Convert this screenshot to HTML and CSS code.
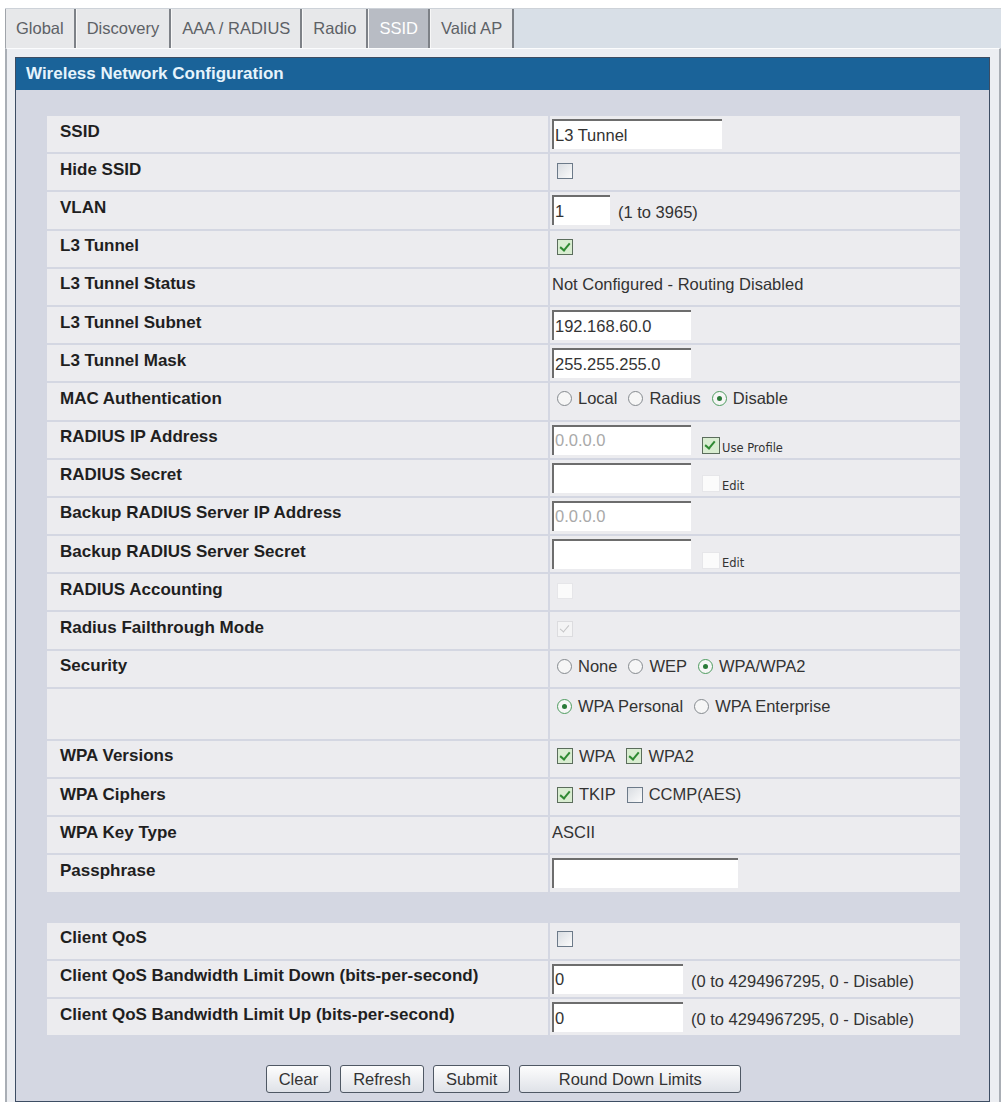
FILE: index.html
```html
<html>
<head>
    <link rel="stylesheet" href="styles.css">
</head>
<body>
  <div class="tabs">
    <div class="tab">Global</div>
    <div class="tab">Discovery</div>
    <div class="tab">AAA / RADIUS</div>
    <div class="tab">Radio</div>
    <div class="tab active">SSID</div>
    <div class="tab">Valid AP</div>
  </div>
  <div class="frame">
    <div class="panel">
      <div class="panel-title">Wireless Network Configuration</div>
      <div class="panel-body">
        <div class="rows">
          <div class="row">
            <div class="label">SSID</div>
            <div class="value"><input class="field w170" value="L3 Tunnel"></div>
          </div>
          <div class="row">
            <div class="label">Hide SSID</div>
            <div class="value"><span class="cb solo"></span></div>
          </div>
          <div class="row">
            <div class="label">VLAN</div>
            <div class="value"><input class="field w58" value="1"><span class="note">(1 to 3965)</span></div>
          </div>
          <div class="row">
            <div class="label">L3 Tunnel</div>
            <div class="value"><span class="cb solo on"></span></div>
          </div>
          <div class="row">
            <div class="label">L3 Tunnel Status</div>
            <div class="value"><span class="txt">Not Configured - Routing Disabled</span></div>
          </div>
          <div class="row">
            <div class="label">L3 Tunnel Subnet</div>
            <div class="value"><input class="field w139" value="192.168.60.0"></div>
          </div>
          <div class="row">
            <div class="label">L3 Tunnel Mask</div>
            <div class="value"><input class="field w139" value="255.255.255.0"></div>
          </div>
          <div class="row">
            <div class="label">MAC Authentication</div>
            <div class="value">
              <span class="opt"><span class="rd"></span>Local</span>
              <span class="opt"><span class="rd"></span>Radius</span>
              <span class="opt"><span class="rd on"></span>Disable</span>
            </div>
          </div>
          <div class="row">
            <div class="label">RADIUS IP Address</div>
            <div class="value">
              <input class="field w139 dim" value="0.0.0.0" disabled>
              <span class="small"><span class="cb big on"></span>Use Profile</span>
            </div>
          </div>
          <div class="row">
            <div class="label">RADIUS Secret</div>
            <div class="value">
              <input class="field w139" value="">
              <span class="small"><span class="cb big blank"></span>Edit</span>
            </div>
          </div>
          <div class="row">
            <div class="label">Backup RADIUS Server IP Address</div>
            <div class="value"><input class="field w139 dim" value="0.0.0.0" disabled></div>
          </div>
          <div class="row">
            <div class="label">Backup RADIUS Server Secret</div>
            <div class="value">
              <input class="field w139" value="">
              <span class="small"><span class="cb big blank"></span>Edit</span>
            </div>
          </div>
          <div class="row">
            <div class="label">RADIUS Accounting</div>
            <div class="value"><span class="cb solo blank"></span></div>
          </div>
          <div class="row">
            <div class="label">Radius Failthrough Mode</div>
            <div class="value"><span class="cb solo faded"></span></div>
          </div>
          <div class="row">
            <div class="label">Security</div>
            <div class="value">
              <span class="opt"><span class="rd"></span>None</span>
              <span class="opt"><span class="rd"></span>WEP</span>
              <span class="opt"><span class="rd on"></span>WPA/WPA2</span>
            </div>
          </div>
          <div class="row tall">
            <div class="label"></div>
            <div class="value">
              <span class="opt"><span class="rd on"></span>WPA Personal</span>
              <span class="opt"><span class="rd"></span>WPA Enterprise</span>
            </div>
          </div>
          <div class="row">
            <div class="label">WPA Versions</div>
            <div class="value">
              <span class="opt"><span class="cb on"></span>WPA</span>
              <span class="opt"><span class="cb on"></span>WPA2</span>
            </div>
          </div>
          <div class="row">
            <div class="label">WPA Ciphers</div>
            <div class="value">
              <span class="opt"><span class="cb on"></span>TKIP</span>
              <span class="opt"><span class="cb"></span>CCMP(AES)</span>
            </div>
          </div>
          <div class="row">
            <div class="label">WPA Key Type</div>
            <div class="value"><span class="txt">ASCII</span></div>
          </div>
          <div class="row">
            <div class="label">Passphrase</div>
            <div class="value"><input class="field w186" value=""></div>
          </div>
        </div>

        <div class="rows">
          <div class="row">
            <div class="label">Client QoS</div>
            <div class="value"><span class="cb solo"></span></div>
          </div>
          <div class="row">
            <div class="label">Client QoS Bandwidth Limit Down (bits-per-second)</div>
            <div class="value"><input class="field w131" value="0"><span class="note">(0 to 4294967295, 0 - Disable)</span></div>
          </div>
          <div class="row">
            <div class="label">Client QoS Bandwidth Limit Up (bits-per-second)</div>
            <div class="value"><input class="field w131" value="0"><span class="note">(0 to 4294967295, 0 - Disable)</span></div>
          </div>
        </div>

        <div class="buttons">
          <button class="btn">Clear</button>
          <button class="btn">Refresh</button>
          <button class="btn">Submit</button>
          <button class="btn wide">Round Down Limits</button>
        </div>
      </div>
    </div>
  </div>
</body>
</html>
```

FILE: styles.css
```css
html, body {
  height: 100%;
}
body {
  margin: 0;
  padding: 0;
  font-family: "Liberation Sans", Arial, sans-serif;
  background: #fff;
  overflow: hidden;
}

/* tab strip */
.tabs {
  display: flex;
  margin: 8px 5px 0 5px;
  height: 40px;
  box-sizing: border-box;
  background: #d8dfe7;
  border-top: 1px solid #cdd2d8;
}

.tab {
  padding: 0 10px;
  line-height: 39px;
  font-size: 16.5px;
  color: #5d6166;
  background: #e7e8ea;
  border-left: 1px solid #f7f7f7;
  border-right: 2px solid #7d8187;
}

.tab:first-child {
  border-left: 1px solid #a0a4aa;
}

.tab.active {
  background: #b8bcc4;
  color: #fff;
}

/* outer frame + panel */
.frame {
  margin: 0 5px;
  padding: 8px 9px 0 8px;
  background: #eceef2;
  border-left: 2px solid #a9aeb5;
  border-right: 2px solid #a9aeb5;
  border-top: 1px solid #fbfcfd;
}

.panel {
  border: 1px solid #3d4d63;
  background: #d4d7e2;
}

.panel-title {
  height: 32px;
  line-height: 32px;
  padding-left: 10px;
  background: #1a6399;
  color: #e6f4fc;
  font-size: 17px;
  font-weight: bold;
}

.panel-body {
  padding: 26px 29px 8px 31px;
}

.rows {
  display: flex;
  flex-direction: column;
  gap: 2px;
}

.rows + .rows {
  margin-top: 31px;
}

.row {
  display: grid;
  grid-template-columns: 501px 1fr;
  column-gap: 2px;
  height: 36.2px;
}

.row.tall {
  height: 50px;
}

.label {
  display: flex;
  align-items: center;
  padding: 0 0 5px 13px;
  background: #ececef;
  color: #1f1f1f;
  font-size: 17px;
  font-weight: bold;
}

.value {
  display: flex;
  align-items: center;
  padding-left: 2px;
  background: #ececef;
  color: #333;
  font-size: 16.5px;
}

.row.tall .value {
  align-items: flex-start;
  padding-top: 8px;
}

.txt {
  margin-bottom: 5px;
}

.note {
  margin: 5px 0 0 8px;
}

/* text inputs */
.field {
  height: 30px;
  box-sizing: border-box;
  padding: 0 1px;
  border: 0;
  border-top: 2px solid #6d6d6d;
  border-left: 2px solid #6d6d6d;
  background: #fff;
  color: #333;
  font-family: "Liberation Sans", Arial, sans-serif;
  font-size: 16.5px;
  outline: none;
}

.field.dim {
  color: #a9a9a9;
}

.w170 { width: 170px; }
.w58 { width: 58px; }
.w139 { width: 139px; }
.w186 { width: 186px; }
.w131 { width: 131px; }

/* checkboxes */
.cb {
  position: relative;
  display: inline-block;
  width: 16px;
  height: 16px;
  box-sizing: border-box;
  border: 1px solid #6c7a89;
  background: linear-gradient(135deg, #d9dde2, #fbfbfb);
  flex: none;
}

.cb.solo {
  margin: 0 0 3px 5px;
}

.cb.on {
  border-color: #5b6d5c;
  background: #d9edd1;
}

.cb.on::after {
  content: "";
  position: absolute;
  left: 4px;
  top: 1px;
  width: 4px;
  height: 8px;
  border: solid #2f8a32;
  border-width: 0 2px 2px 0;
  transform: rotate(40deg);
}

.cb.blank {
  border-color: #e6e6e9;
  background: #fbfbfb;
}

.cb.faded {
  border-color: #dcdcdf;
  background: #f4f4f5;
}

.cb.faded::after {
  content: "";
  position: absolute;
  left: 4px;
  top: 1px;
  width: 4px;
  height: 8px;
  border: solid #c4c4c6;
  border-width: 0 1px 1px 0;
  transform: rotate(40deg);
}

.cb.big {
  width: 18px;
  height: 17px;
}

.small {
  display: flex;
  align-items: flex-end;
  gap: 2px;
  margin: 12px 0 0 11px;
  font-family: "DejaVu Sans", sans-serif;
  font-size: 11.5px;
  color: #333;
  line-height: 12px;
}

/* radios and option groups */
.opt {
  display: inline-flex;
  align-items: center;
  gap: 6px;
  margin: 0 11px 5px 0;
}

.opt:first-child {
  margin-left: 5px;
}

.rd {
  position: relative;
  display: inline-block;
  width: 15px;
  height: 15px;
  box-sizing: border-box;
  border: 1px solid #858a8f;
  border-radius: 50%;
  background: #f6f6f6;
  flex: none;
}

.rd.on {
  border-color: #4f9c60;
}

.rd.on::after {
  content: "";
  position: absolute;
  left: 4px;
  top: 4px;
  width: 5px;
  height: 5px;
  border-radius: 50%;
  background: #2a7a38;
}

/* buttons */
.buttons {
  display: flex;
  justify-content: center;
  gap: 9px;
  margin-top: 30px;
}

.btn {
  height: 28px;
  padding: 0 12px;
  border: 1px solid #4f5864;
  border-radius: 3px;
  background: linear-gradient(#fdfdfd, #dfe2e8);
  color: #333;
  font-family: "Liberation Sans", Arial, sans-serif;
  font-size: 16.5px;
}

.btn.wide {
  width: 222px;
}
```
